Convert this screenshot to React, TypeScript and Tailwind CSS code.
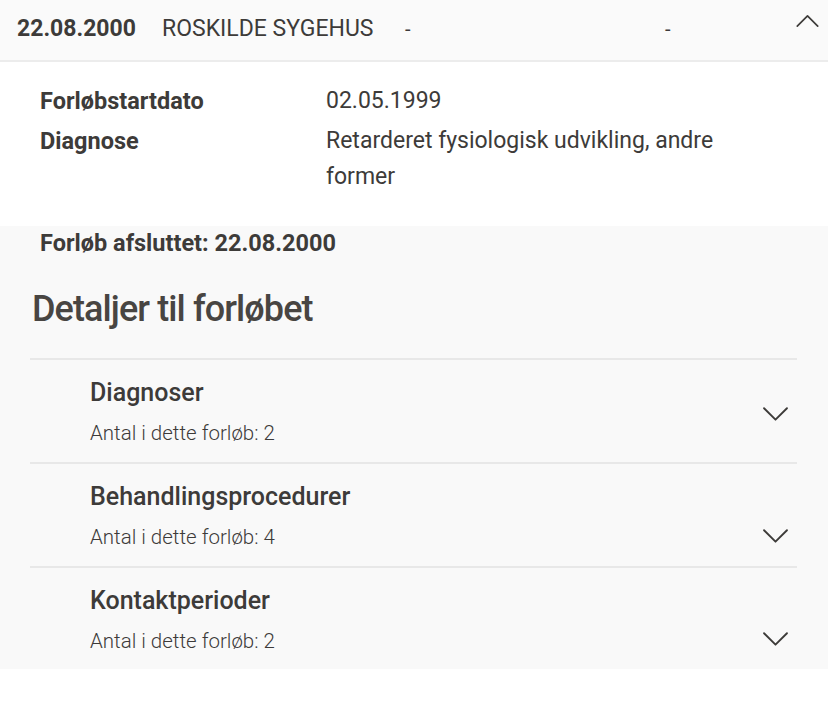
const font = { fontFamily: '"Liberation Sans Narrow", "Roboto", sans-serif' };

type Item = { title: string; count: number; chevronLow?: boolean };

const items: Item[] = [
  { title: "Diagnoser", count: 2 },
  { title: "Behandlingsprocedurer", count: 4, chevronLow: true },
  { title: "Kontaktperioder", count: 2, chevronLow: true },
];

function Chevron({ up = false, className = "" }: { up?: boolean; className?: string }) {
  return (
    <svg viewBox="0 0 24 14" className={className} fill="none" stroke="currentColor" strokeWidth={1.8} strokeLinecap="round" strokeLinejoin="round">
      <polyline points={up ? "1,13 12,2 23,13" : "1,1 12,12 23,1"} />
    </svg>
  );
}

function Detail({ label, value }: { label: string; value: string }) {
  return (
    <div className="flex">
      <div className="w-[286px] shrink-0 text-[23.5px] font-bold leading-[36px]">{label}</div>
      <div className="w-[440px] text-[23px] leading-[36px]">{value}</div>
    </div>
  );
}

export default function App() {
  return (
    <div className="w-[828px] h-[704px] bg-white text-[#3d3b39]" style={font}>
      {/* Header */}
      <div className="h-[62px] bg-[#fafafa] border-b-2 border-[#ececec] flex items-center pl-[17px] pr-[9px] pb-[2px]">
        <span className="text-[23px] font-bold w-[145px]">22.08.2000</span>
        <span className="text-[23px] w-[243px]">ROSKILDE SYGEHUS</span>
        <span className="text-[20px] w-[260px]">-</span>
        <span className="text-[20px] flex-1">-</span>
        <Chevron up className="w-[23px] h-[13px] -mt-[18px]" />
      </div>

      {/* Details */}
      <div className="pl-[40px] pt-[21px] pb-[31px] flex flex-col gap-[4px]">
        <Detail label="Forløbstartdato" value="02.05.1999" />
        <Detail label="Diagnose" value="Retarderet fysiologisk udvikling, andre former" />
      </div>

      {/* Forløb section */}
      <div className="bg-[#f9f9f9]">
        <div className="pl-[40px] text-[23.5px] font-bold leading-[34px]">Forløb afsluttet: 22.08.2000</div>
        <h2 className="pl-[32px] mt-[26px] text-[36px] font-medium tracking-tight leading-[46px] text-[#484542]">
          Detaljer til forløbet
        </h2>
        <div className="mx-[30px] mt-[26px] w-[767px]">
          {items.map((it) => (
            <div key={it.title} className="border-t-2 border-[#e8e8e8] h-[104px] last:h-[103px] flex">
              <div className="pl-[60px] pt-[16px] flex-1">
                <div className="text-[25px] font-medium leading-[34px]">{it.title}</div>
                <div className="text-[20.5px] font-light leading-[30px] mt-[8px]">
                  Antal i dette forløb: {it.count}
                </div>
              </div>
              <div className={`flex pr-[9px] ${it.chevronLow ? "items-end pb-[22px]" : "items-center pt-[6px]"}`}>
                <Chevron className="w-[25px] h-[15px]" />
              </div>
            </div>
          ))}
        </div>
      </div>
    </div>
  );
}
